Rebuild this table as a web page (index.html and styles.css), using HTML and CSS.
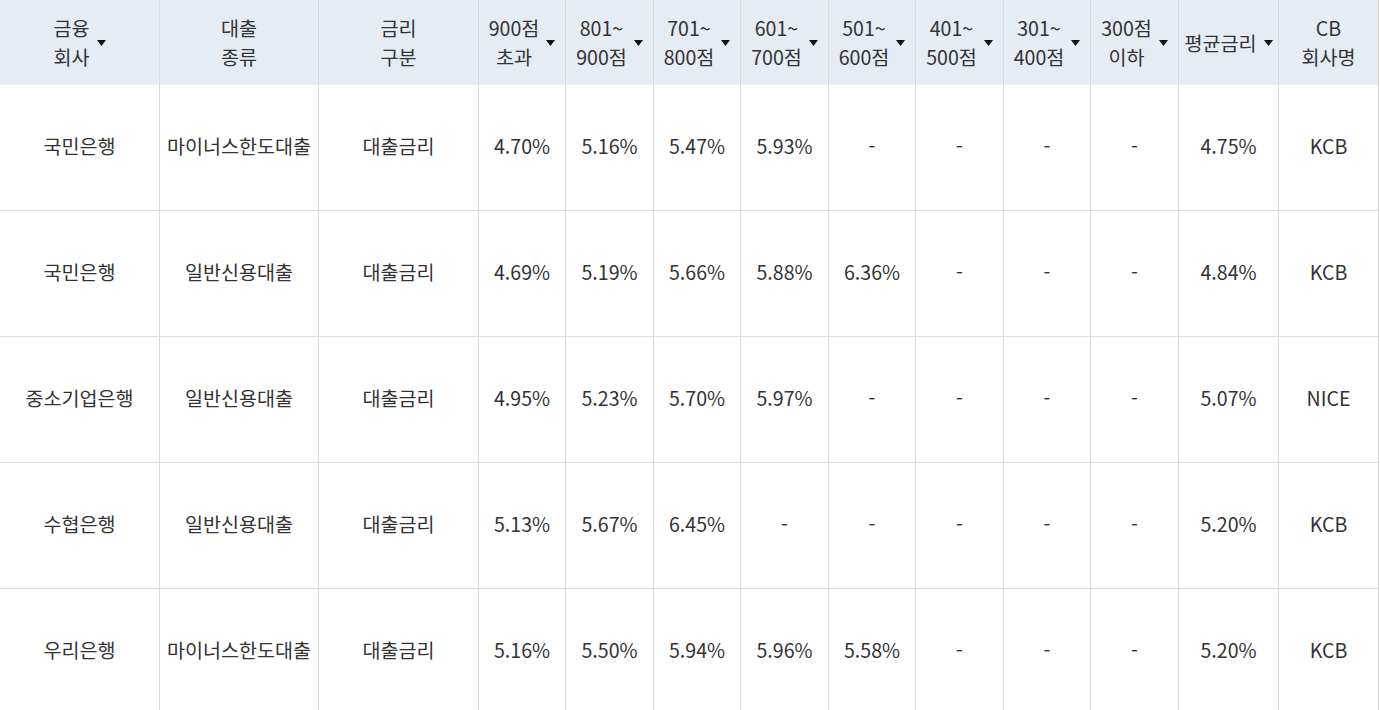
FILE: index.html
```html
<!DOCTYPE html>
<html lang="ko">
<head>
<meta charset="utf-8">
<title>신용점수별 금리</title>
<link rel="stylesheet" href="styles.css">
</head>
<body>
<table class="rate-table">
  <colgroup>
    <col class="c-wide1"><col class="c-wide2"><col class="c-wide1">
    <col class="c-n87"><col class="c-n88"><col class="c-n87"><col class="c-n88">
    <col class="c-n87"><col class="c-n88"><col class="c-n87"><col class="c-n88">
    <col class="c-w100"><col class="c-w100">
  </colgroup>
  <thead>
    <tr>
      <th><div class="hd"><span class="hd-text">금융<br>회사</span><svg class="arrow" width="9" height="6" viewBox="0 0 9 6"><path d="M0 0H9L4.5 6Z"/></svg></div></th>
      <th><div class="hd"><span class="hd-text">대출<br>종류</span></div></th>
      <th><div class="hd"><span class="hd-text">금리<br>구분</span></div></th>
      <th><div class="hd"><span class="hd-text">900점<br>초과</span><svg class="arrow" width="9" height="6" viewBox="0 0 9 6"><path d="M0 0H9L4.5 6Z"/></svg></div></th>
      <th><div class="hd"><span class="hd-text">801~<br>900점</span><svg class="arrow" width="9" height="6" viewBox="0 0 9 6"><path d="M0 0H9L4.5 6Z"/></svg></div></th>
      <th><div class="hd"><span class="hd-text">701~<br>800점</span><svg class="arrow" width="9" height="6" viewBox="0 0 9 6"><path d="M0 0H9L4.5 6Z"/></svg></div></th>
      <th><div class="hd"><span class="hd-text">601~<br>700점</span><svg class="arrow" width="9" height="6" viewBox="0 0 9 6"><path d="M0 0H9L4.5 6Z"/></svg></div></th>
      <th><div class="hd"><span class="hd-text">501~<br>600점</span><svg class="arrow" width="9" height="6" viewBox="0 0 9 6"><path d="M0 0H9L4.5 6Z"/></svg></div></th>
      <th><div class="hd"><span class="hd-text">401~<br>500점</span><svg class="arrow" width="9" height="6" viewBox="0 0 9 6"><path d="M0 0H9L4.5 6Z"/></svg></div></th>
      <th><div class="hd"><span class="hd-text">301~<br>400점</span><svg class="arrow" width="9" height="6" viewBox="0 0 9 6"><path d="M0 0H9L4.5 6Z"/></svg></div></th>
      <th><div class="hd"><span class="hd-text">300점<br>이하</span><svg class="arrow" width="9" height="6" viewBox="0 0 9 6"><path d="M0 0H9L4.5 6Z"/></svg></div></th>
      <th><div class="hd"><span class="hd-text">평균금리</span><svg class="arrow" width="9" height="6" viewBox="0 0 9 6"><path d="M0 0H9L4.5 6Z"/></svg></div></th>
      <th><div class="hd"><span class="hd-text">CB<br>회사명</span></div></th>
    </tr>
  </thead>
  <tbody>
    <tr>
      <td>국민은행</td><td>마이너스한도대출</td><td>대출금리</td>
      <td>4.70%</td><td>5.16%</td><td>5.47%</td><td>5.93%</td><td>-</td><td>-</td><td>-</td><td>-</td>
      <td>4.75%</td><td>KCB</td>
    </tr>
    <tr>
      <td>국민은행</td><td>일반신용대출</td><td>대출금리</td>
      <td>4.69%</td><td>5.19%</td><td>5.66%</td><td>5.88%</td><td>6.36%</td><td>-</td><td>-</td><td>-</td>
      <td>4.84%</td><td>KCB</td>
    </tr>
    <tr>
      <td>중소기업은행</td><td>일반신용대출</td><td>대출금리</td>
      <td>4.95%</td><td>5.23%</td><td>5.70%</td><td>5.97%</td><td>-</td><td>-</td><td>-</td><td>-</td>
      <td>5.07%</td><td>NICE</td>
    </tr>
    <tr>
      <td>수협은행</td><td>일반신용대출</td><td>대출금리</td>
      <td>5.13%</td><td>5.67%</td><td>6.45%</td><td>-</td><td>-</td><td>-</td><td>-</td><td>-</td>
      <td>5.20%</td><td>KCB</td>
    </tr>
    <tr>
      <td>우리은행</td><td>마이너스한도대출</td><td>대출금리</td>
      <td>5.16%</td><td>5.50%</td><td>5.94%</td><td>5.96%</td><td>5.58%</td><td>-</td><td>-</td><td>-</td>
      <td>5.20%</td><td>KCB</td>
    </tr>
  </tbody>
</table>
</body>
</html>
```

FILE: styles.css
```css
html, body {
  margin: 0;
  padding: 0;
  background: #fff;
}

body {
  font-family: "Noto Sans CJK KR", "Noto Sans", sans-serif;
  font-size: 19.6px;
  color: #333;
}

.rate-table {
  border-collapse: separate;
  border-spacing: 0;
  table-layout: fixed;
  width: 1379px;
}

.c-wide1 { width: 160px; }
.c-wide2 { width: 159px; }
.c-n87 { width: 87px; }
.c-n88 { width: 88px; }
.c-w100 { width: 100px; }

.rate-table th,
.rate-table td {
  padding: 0;
  border-right: 1px solid #dadada;
  text-align: center;
  vertical-align: middle;
  white-space: nowrap;
}

.rate-table th {
  height: 85px;
  background: #e6ecf4;
  font-weight: 400;
  line-height: 29px;
}

.rate-table td {
  height: 122px;
  padding-bottom: 3px;
  border-bottom: 1px solid #dadada;
  line-height: 26px;
}

.hd {
  display: flex;
  align-items: center;
  justify-content: center;
  gap: 7px;
}

.hd-text {
  display: block;
  padding-bottom: 1px;
}

.arrow {
  display: block;
  fill: #111;
  flex: none;
}
```
